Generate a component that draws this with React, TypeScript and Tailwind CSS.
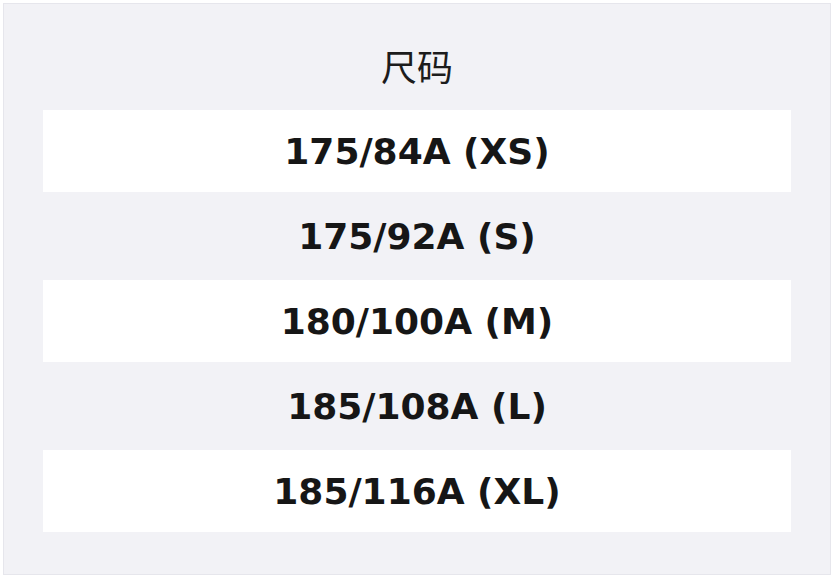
const sizes = [
  '175/84A (XS)',
  '175/92A (S)',
  '180/100A (M)',
  '185/108A (L)',
  '185/116A (XL)',
];

export default function App() {
  return (
    <div className="w-[834px] h-[578px] bg-white p-[3px] font-['DejaVu_Sans','Noto_Sans_CJK_SC',sans-serif]">
      <div className="w-[828px] h-[572px] bg-[#f2f2f6] border border-[#e6e6ec] px-[39px] pt-[45px]">
        {/* Title */}
        <h2 className="text-center text-[36px] leading-[40px] text-[#1c1c1c] mb-[21px]">尺码</h2>

        {/* Size list */}
        <div className="flex flex-col gap-[3px]">
          {sizes.map((s, i) => (
            <div
              key={s}
              className={
                i % 2 === 0
                  ? 'h-[82px] pt-[2px] flex items-center justify-center bg-white'
                  : 'h-[82px] pt-[2px] flex items-center justify-center bg-[#f2f2f6]'
              }
            >
              <span className="text-[36px] font-bold text-[#161616]">{s}</span>
            </div>
          ))}
        </div>
      </div>
    </div>
  );
}
